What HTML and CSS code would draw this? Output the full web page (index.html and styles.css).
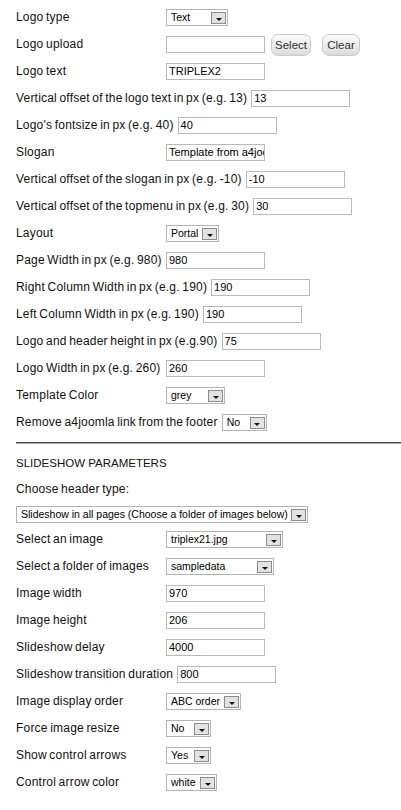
FILE: index.html
```html
<!DOCTYPE html>
<html>
<head>
<meta charset="utf-8">
<title>Template parameters</title>
<link rel="stylesheet" href="styles.css">
</head>
<body>
<div class="form">
  <div class="row"><span class="label">Logo type</span><span class="select w62"><span class="val">Text</span><span class="arrow"></span></span></div>
  <div class="row"><span class="label">Logo upload</span><span class="input"></span><span class="btn btn-select">Select</span><span class="btn btn-clear">Clear</span></div>
  <div class="row"><span class="label">Logo text</span><span class="input">TRIPLEX2</span></div>
  <div class="row"><span class="label">Vertical offset of the logo text in px (e.g. 13)</span><span class="input">13</span></div>
  <div class="row"><span class="label">Logo's fontsize in px (e.g. 40)</span><span class="input">40</span></div>
  <div class="row"><span class="label">Slogan</span><span class="input">Template from a4joomla</span></div>
  <div class="row"><span class="label">Vertical offset of the slogan in px (e.g. -10)</span><span class="input">-10</span></div>
  <div class="row"><span class="label">Vertical offset of the topmenu in px (e.g. 30)</span><span class="input">30</span></div>
  <div class="row"><span class="label">Layout</span><span class="select w53"><span class="val">Portal</span><span class="arrow"></span></span></div>
  <div class="row"><span class="label">Page Width in px (e.g. 980)</span><span class="input">980</span></div>
  <div class="row"><span class="label">Right Column Width in px (e.g. 190)</span><span class="input">190</span></div>
  <div class="row"><span class="label">Left Column Width in px (e.g. 190)</span><span class="input">190</span></div>
  <div class="row"><span class="label">Logo and header height in px (e.g.90)</span><span class="input">75</span></div>
  <div class="row"><span class="label">Logo Width in px (e.g. 260)</span><span class="input">260</span></div>
  <div class="row"><span class="label">Template Color</span><span class="select w59"><span class="val">grey</span><span class="arrow"></span></span></div>
  <div class="row"><span class="label">Remove a4joomla link from the footer</span><span class="select w45"><span class="val">No</span><span class="arrow"></span></span></div>

  <div class="divider"></div>

  <div class="row section-title">SLIDESHOW PARAMETERS</div>
  <div class="row tight"><span class="label">Choose header type:</span></div>
  <div class="row tight"><span class="select w292"><span class="val">Slideshow in all pages (Choose a folder of images below)</span><span class="arrow"></span></span></div>
  <div class="row"><span class="label">Select an image</span><span class="select w117"><span class="val">triplex21.jpg</span><span class="arrow"></span></span></div>
  <div class="row"><span class="label">Select a folder of images</span><span class="select w108"><span class="val">sampledata</span><span class="arrow"></span></span></div>
  <div class="row"><span class="label">Image width</span><span class="input">970</span></div>
  <div class="row"><span class="label">Image height</span><span class="input">206</span></div>
  <div class="row"><span class="label">Slideshow delay</span><span class="input">4000</span></div>
  <div class="row"><span class="label">Slideshow transition duration</span><span class="input">800</span></div>
  <div class="row"><span class="label">Image display order</span><span class="select w75"><span class="val">ABC order</span><span class="arrow"></span></span></div>
  <div class="row"><span class="label">Force image resize</span><span class="select w45"><span class="val">No</span><span class="arrow"></span></span></div>
  <div class="row"><span class="label">Show control arrows</span><span class="select w45"><span class="val">Yes</span><span class="arrow"></span></span></div>
  <div class="row"><span class="label">Control arrow color</span><span class="select w51"><span class="val">white</span><span class="arrow"></span></span></div>
</div>
</body>
</html>
```

FILE: styles.css
```css
html, body {
  margin: 0;
  padding: 0;
  background: #ffffff;
}

body {
  font-family: "Liberation Sans", Arial, sans-serif;
  color: #111;
  overflow: hidden;
}

.form {
  display: flex;
  flex-direction: column;
  gap: 10px;
  padding: 9px 0 0 16px;
}

.row {
  display: flex;
  align-items: center;
  gap: 4px;
  height: 17px;
  white-space: nowrap;
}

.row.tight {
  margin-bottom: -2px;
}

.label {
  min-width: 146px;
  font-size: 12px;
  line-height: 17px;
  letter-spacing: 0.2px;
  word-spacing: -1px;
  color: #111;
  margin-top: -1px;
}

.section-title {
  font-size: 11.5px;
  color: #111;
}

.divider {
  margin-top: 1px;
  height: 0;
  border-top: 1px solid #4e4e4e;
  border-bottom: 1px solid #a8a8a8;
}

.input {
  box-sizing: border-box;
  width: 99px;
  height: 17px;
  border: 1px solid #b9b9b9;
  background: #fff;
  font-size: 11px;
  line-height: 15px;
  padding: 0 2px;
  overflow: hidden;
  color: #000;
}

.select {
  box-sizing: border-box;
  display: flex;
  align-items: center;
  height: 17px;
  border: 1px solid #b4b4b4;
  background: #fff;
  color: #000;
}

.select .val {
  flex: 1;
  font-size: 10.5px;
  line-height: 15px;
  padding-left: 4px;
  overflow: hidden;
  white-space: nowrap;
}

.select .arrow {
  box-sizing: border-box;
  flex: none;
  width: 15px;
  height: 12px;
  margin: 1px 1px 0 2px;
  border: 1px solid #8c8c8c;
  background: #e2e2e2;
  display: flex;
  align-items: center;
  justify-content: center;
}

.select .arrow::after {
  content: "";
  width: 0;
  height: 0;
  margin-top: 3px;
  border-left: 3.5px solid transparent;
  border-right: 3.5px solid transparent;
  border-top: 3.5px solid #111;
}

.w45 { width: 45px; }
.w51 { width: 51px; }
.w53 { width: 53px; }
.w59 { width: 59px; }
.w62 { width: 62px; }
.w75 { width: 75px; }
.w108 { width: 108px; }
.w117 { width: 117px; }
.w292 { width: 292px; }

.btn {
  box-sizing: border-box;
  display: flex;
  align-items: center;
  justify-content: center;
  height: 22px;
  border: 1px solid #c9c9c9;
  border-radius: 7px;
  background: linear-gradient(#fbfbfb, #e9e9e9 60%, #dcdcdc);
  font-size: 11.5px;
  color: #333;
}

.btn-select {
  width: 40px;
  margin-left: 2px;
}

.btn-clear {
  width: 38px;
  margin-left: 7px;
}
```
